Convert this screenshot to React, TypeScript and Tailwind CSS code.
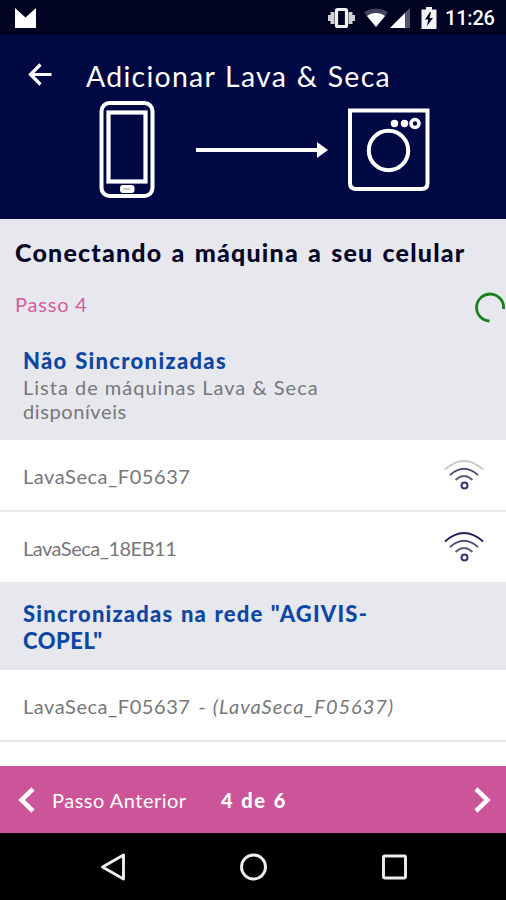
import type { ReactNode } from "react";

const unsynced = [
  { name: "LavaSeca_F05637", full: false, spacing: "tracking-[0.55px]" },
  { name: "LavaSeca_18EB11", full: true, spacing: "tracking-[-0.5px]" },
];

function StatusBar() {
  return (
    <div className="flex h-[35px] items-center bg-[#000322] pl-[15px] pr-[11px] text-white">
      <svg className="h-[22px] w-[21px]" viewBox="0 0 21 22" fill="#fff">
        <path d="M0 1 10.500 10.500 21 1V21H0z" />
      </svg>
      <svg className="ml-auto h-[22px] w-[27px]" viewBox="0 0 27 22" fill="#d0d0d6">
        <path d="M0 8h2.500v6H0zM2.500 5h4v12h-4zM20.500 5h4v12h-4zM24.500 8H27v6h-2.500z" />
        <rect x="8.500" y="2.500" width="10" height="17" rx="1" fill="none" stroke="#f0f0f2" strokeWidth="3.200" />
      </svg>
      <svg className="ml-[8px] h-[20px] w-[26px]" viewBox="0 0 26 20">
        <path d="M1 4.500C8-1 18-1 25 4.500L13 19z" fill="#40435d" />
        <path d="M4 8C9 4 17 4 22 8L13 19z" fill="#fff" />
      </svg>
      <svg className="ml-[1px] h-[20px] w-[20px]" viewBox="0 0 20 20">
        <path d="M20 0V20H0z" fill="#51546c" />
        <path d="M15 5V20H0z" fill="#fff" />
      </svg>
      <svg className="ml-[11px] h-[22px] w-[16px]" viewBox="0 0 16 22">
        <path d="M5 0h6v2.500h4.500V22H.5V2.500H5z" fill="#f2f2f2" />
        <path d="M9 5 4 12.500h3.300L6 19l6-8H8.500L10 5z" fill="#000322" />
      </svg>
      <span className="ml-[8px] w-[50px] whitespace-nowrap font-[Roboto] text-[20px] font-medium leading-none tracking-[-0.2px]">
        11:26
      </span>
    </div>
  );
}

function Header() {
  return (
    <header className="h-[184px] bg-[#000944] text-white">
      <div className="flex h-[66px] items-center pl-[28px] pt-[14px]">
        <svg className="h-[24px] w-[24px]" viewBox="0 0 24 24" fill="none" stroke="#fff" strokeWidth="3.200">
          <path d="M23.500 11.500H2.500M12.500 1.500 2.500 11.500l10 10" />
        </svg>
        <h1 className="ml-[34px] whitespace-nowrap pt-[1px] text-[28.500px] leading-[34px] tracking-[1.250px] [word-spacing:1px]">
          Adicionar Lava &amp; Seca
        </h1>
      </div>
      <div className="flex items-start pl-[99px]">
        <svg className="h-[97px] w-[56px]" viewBox="0 0 56 97" fill="none" stroke="#fff">
          <rect x="2.500" y="2" width="51" height="93" rx="8" strokeWidth="4" />
          <rect x="9.500" y="11.500" width="37" height="69" strokeWidth="4.200" />
          <rect x="21" y="84" width="14.500" height="8" rx="3" fill="#fff" stroke="none" />
          <path d="M24.500 88h7" stroke="#8b8fae" />
        </svg>
        <svg className="ml-[40px] mt-[40px] h-[18px] w-[133px]" viewBox="0 0 133 18">
          <path d="M1 9h122" stroke="#fff" strokeWidth="4.200" />
          <path d="M122 1v16l11-8z" fill="#fff" />
        </svg>
        <svg className="ml-[19px] mt-[7px] h-[84px] w-[83px]" viewBox="0 0 83 84" fill="none" stroke="#fff">
          <path d="M3 2.500H80.500V75q0 6-6 6H9q-6 0-6-6z" strokeWidth="4" />
          <circle cx="41.500" cy="42.500" r="19.700" strokeWidth="4" />
          <circle cx="47.500" cy="15.500" r="3.700" fill="#fff" stroke="none" />
          <circle cx="57.500" cy="15.500" r="3.700" fill="#fff" stroke="none" />
          <circle cx="68" cy="15.500" r="4" strokeWidth="3.600" />
        </svg>
      </div>
    </header>
  );
}

function SignalIcon({ full }: { full: boolean }) {
  return (
    <svg className="mb-[2px] h-[32px] w-[40px]" viewBox="0 0 40 32" fill="none" strokeWidth="1.800">
      <path d="M1 10.500Q20-6.500 39 10.500" stroke={full ? "#1d1d5c" : "#c8c8cc"} />
      <path d="M6 16Q20 3.500 34 16" stroke="#4b4b70" />
      <path d="M11.500 21Q20 13 28.500 21" stroke="#62627f" />
      <circle cx="20.500" cy="26.500" r="3" stroke="#34346e" strokeWidth="2" />
    </svg>
  );
}

function Row({ children }: { children: ReactNode }) {
  return (
    <div className="flex h-[72px] shrink-0 items-center justify-between border-b-2 border-[#e6e6ea] bg-white pl-[23px] pr-[22px] pt-[2px] text-[20px] text-[#77777a]">
      {children}
    </div>
  );
}

export default function App() {
  return (
    <div className="flex h-[900px] w-[506px] flex-col overflow-hidden bg-white font-[Lato,sans-serif]">
      <StatusBar />
      <Header />

      <section className="h-[221px] shrink-0 bg-[#e7e8ee] pt-[17px]">
        <h2 className="whitespace-nowrap pl-[15px] text-[25px] font-black leading-[32px] tracking-[1.200px] text-[#050527] [word-spacing:2px]">
          Conectando a máquina a seu celular
        </h2>
        <div className="mt-[20px] flex h-[36px] justify-between border-t border-[#e4e5eb] pl-[15px]">
          <span className="text-[20px] leading-[31px] tracking-[0.8px] text-[#d65b9b]">Passo 4</span>
          <svg className="mt-[3px] h-[32px] w-[32px]" viewBox="0 0 32 32" fill="none">
            <path d="M15.500 29A13.500 13.500 0 1 1 29.500 17" stroke="#16821f" strokeWidth="2.800" />
          </svg>
        </div>
        <div className="pl-[23px] pt-[23px]">
          <h3 className="text-[22px] font-black leading-[27px] tracking-[1.300px] text-[#0d47a1] [word-spacing:1px]">
            Não Sincronizadas
          </h3>
          <p className="w-[330px] pt-[1px] text-[20px] leading-[24px] tracking-[1px] text-[#77777a]">
            Lista de máquinas Lava &amp; Seca
            <br />
            <span className="tracking-[0.6px]">disponíveis</span>
          </p>
        </div>
      </section>

      {unsynced.map((m) => (
        <Row key={m.name}>
          <span className={m.spacing}>{m.name}</span>
          <SignalIcon full={m.full} />
        </Row>
      ))}

      <section className="h-[86px] shrink-0 bg-[#e7e8ee] pl-[23px] pt-[16px]">
        <h3 className="text-[22px] font-black leading-[27px] text-[#0d47a1]">
          <span className="tracking-[1.200px] [word-spacing:1px]">Sincronizadas na rede "AGIVIS-</span>
          <br />
          <span className="tracking-[0.5px]">COPEL"</span>
        </h3>
      </section>
      <Row>
        <span className="whitespace-nowrap tracking-[0.55px]">
          LavaSeca_F05637 <span className="pl-[2px] pr-[1px]">-</span>{" "}
          <em className="tracking-[1px]">(LavaSeca_F05637)</em>
        </span>
      </Row>

      <footer className="mt-auto flex h-[67px] items-center bg-[#cc5499] pl-[18px] pr-[15px] text-[20px] text-white">
        <svg className="h-[26px] w-[17px]" viewBox="0 0 17 26" fill="none" stroke="#fff" strokeWidth="4.500">
          <path d="M15 2 3.500 13 15 24" />
        </svg>
        <span className="ml-[17px] w-[169px] pt-[1px] tracking-[0.5px]">Passo Anterior</span>
        <span className="pt-[1px] font-black tracking-[1.700px] [word-spacing:0.500px]">4 de 6</span>
        <svg className="ml-auto h-[26px] w-[17px]" viewBox="0 0 17 26" fill="none" stroke="#fff" strokeWidth="4.500">
          <path d="M2 2 13.500 13 2 24" />
        </svg>
      </footer>
      <nav className="flex h-[67px] shrink-0 items-center bg-black pl-[100px]">
        <svg className="h-[28px] w-[26px]" viewBox="0 0 26 28" fill="none" stroke="#eee" strokeWidth="2.900">
          <path d="M23.500 2v24L2.500 14z" strokeLinejoin="round" />
        </svg>
        <svg className="ml-[113px] h-[28px] w-[28px]" viewBox="0 0 28 28" fill="none" stroke="#eee" strokeWidth="2.900">
          <circle cx="14.500" cy="14" r="12" />
        </svg>
        <svg className="ml-[115px] h-[26px] w-[26px]" viewBox="0 0 26 26" fill="none" stroke="#eee" strokeWidth="2.900">
          <rect x="1.500" y="2" width="22" height="22" rx="1" />
        </svg>
      </nav>
    </div>
  );
}
